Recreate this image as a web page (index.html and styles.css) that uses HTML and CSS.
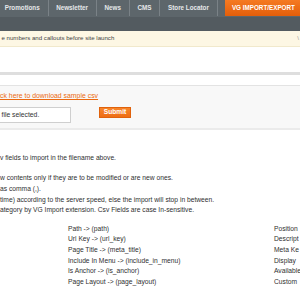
FILE: index.html
```html
<!DOCTYPE html>
<html lang="en">
<head>
  <meta charset="UTF-8" />
  <title>VG Import/Export</title>
  <link rel="stylesheet" href="styles.css">
</head>
<body>
  <div class="nav">
    <ul class="nav-list">
      <li>Promotions</li>
      <li>Newsletter</li>
      <li>News</li>
      <li>CMS</li>
      <li>Store Locator</li>
      <li class="active">VG IMPORT/EXPORT</li>
    </ul>
  </div>
  <div class="nav-sub"></div>

  <div class="notice">
    <span>e numbers and callouts before site launch</span>
    <span class="notice-close">\</span>
  </div>

  <div class="page-head"></div>

  <div class="upload-box">
    <a href="#" class="sample-link">ck here to download sample csv</a>
    <div class="upload-row">
      <div class="file-box">file selected.</div>
      <a href="#" class="submit-btn">Submit</a>
    </div>
  </div>

  <div class="notes">
    <p class="notes-first">v fields to import in the filename above.</p>
    <p>w contents only if they are to be modified or are new ones.<br>
      as comma (,).<br>
      time) according to the server speed, else the import will stop in between.<br>
      ategory by VG Import extension. Csv Fields are case In-sensitive.</p>
  </div>

  <div class="fields">
    <div class="field-col">
      <span>Path -&gt; (path)</span>
      <span>Url Key -&gt; (url_key)</span>
      <span>Page Title -&gt; (meta_title)</span>
      <span>Include In Menu -&gt; (include_in_menu)</span>
      <span>Is Anchor -&gt; (is_anchor)</span>
      <span>Page Layout -&gt; (page_layout)</span>
    </div>
    <div class="field-col">
      <span>Position</span>
      <span>Descript</span>
      <span>Meta Ke</span>
      <span>Display</span>
      <span>Available</span>
      <span>Custom</span>
    </div>
  </div>
</body>
</html>
```

FILE: styles.css
```css
* {
  margin: 0;
  padding: 0;
  box-sizing: border-box;
}

html, body {
  width: 300px;
  height: 300px;
  overflow: hidden;
}

body {
  background: #fff;
  font-family: 'Liberation Sans', Arial, sans-serif;
  font-size: 6.7px;
  line-height: 10.6px;
  color: #2f2f2f;
  white-space: nowrap;
}

/* top menu */
.nav {
  height: 17px;
  background: #5d666b;
}

.nav-list {
  list-style: none;
  display: flex;
  height: 100%;
  padding-left: 4.7px;
}

.nav-list li {
  display: flex;
  align-items: center;
  padding: 0 8px 0 0;
  margin-right: 7.5px;
  border-right: 1px solid #7a8287;
  color: #e6e8ea;
  font-weight: bold;
  font-size: 6.3px;
  height: 16px;
}

.nav-list li.active {
  border-right: none;
  margin-left: -0.5px;
  margin-right: 0;
  padding: 0 7px;
  background: linear-gradient(#f57a22, #e35e0a);
  color: #fff;
}

.nav-sub {
  height: 14px;
  background: #535b60;
}

/* system message */
.notice {
  display: flex;
  justify-content: space-between;
  align-items: center;
  height: 16px;
  padding-left: 1.5px;
  background: #fdf7e4;
  border-bottom: 1px solid #f1e9cc;
  font-size: 6.1px;
  color: #444;
}

.notice-close {
  color: #999;
  margin-right: 1px;
}

.page-head {
  height: 28px;
  border-bottom: 3px solid #dedede;
}

/* upload form */
.upload-box {
  margin-top: 10px;
  padding: 5.4px 0 5px 0;
  background: #f8f8f8;
  border-top: 1px solid #e3e3e3;
  border-bottom: 2px solid #ebebeb;
}

.sample-link {
  display: block;
  font-size: 6.9px;
  color: #eb6a10;
}

.upload-row {
  display: flex;
  align-items: flex-start;
  margin-top: 5px;
  gap: 28px;
}

.file-box {
  width: 71px;
  height: 16.5px;
  padding-left: 1.5px;
  display: flex;
  align-items: center;
  background: #fff;
  border: 1px solid #cfcfcf;
  border-left: none;
  font-size: 6.8px;
  color: #333;
}

.submit-btn {
  width: 32px;
  height: 11px;
  display: flex;
  align-items: center;
  justify-content: center;
  background: linear-gradient(#f7852a, #ee6d14);
  border: 1px solid #e0620c;
  color: #fff;
  font-weight: bold;
  font-size: 6.6px;
  text-decoration: none;
}

/* notes */
.notes {
  margin-top: 23px;
}

.notes-first {
  margin-bottom: 9.4px;
}

.fields {
  display: grid;
  grid-template-columns: 206px 26px;
  margin-top: 8px;
  padding-left: 68px;
}

.field-col {
  display: flex;
  flex-direction: column;
}
```
